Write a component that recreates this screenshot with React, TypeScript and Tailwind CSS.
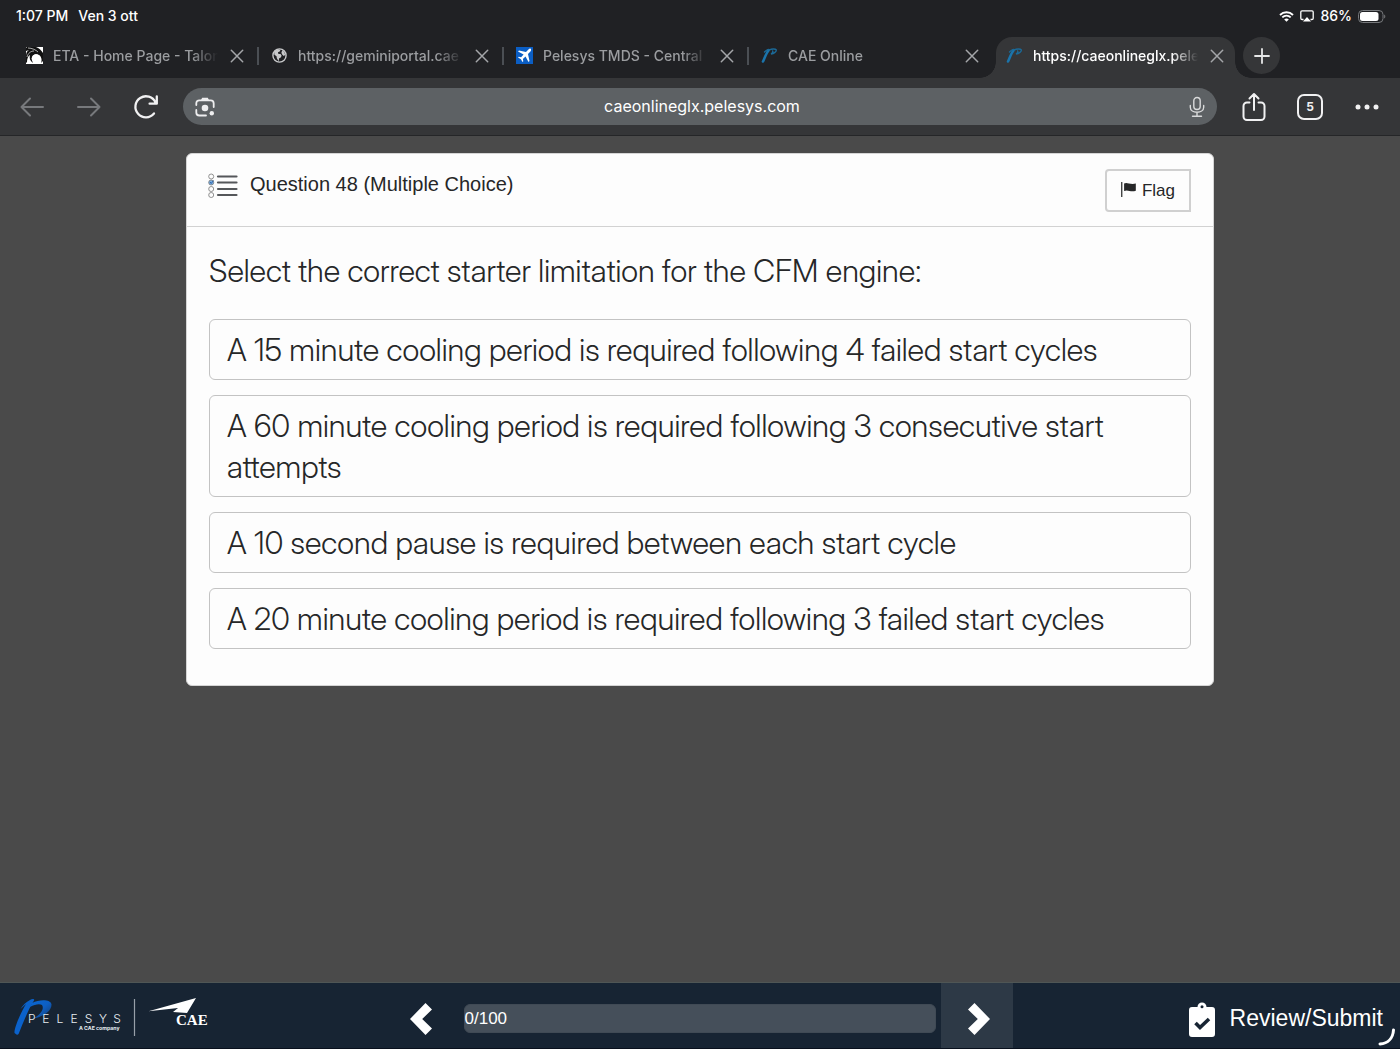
import React from "react";

const tabs = [
  { title: "ETA - Home Page - Talon", icon: "eta" },
  { title: "https://geminiportal.cae", icon: "globe" },
  { title: "Pelesys TMDS - Central", icon: "plane" },
  { title: "CAE Online", icon: "pelesys" },
  { title: "https://caeonlineglx.pele", icon: "pelesys", active: true },
];

const answers = [
  "A 15 minute cooling period is required following 4 failed start cycles",
  "A 60 minute cooling period is required following 3 consecutive start attempts",
  "A 10 second pause is required between each start cycle",
  "A 20 minute cooling period is required following 3 failed start cycles",
];

function Favicon({ kind }: { kind: string }) {
  if (kind === "eta")
    return (
      <svg viewBox="0 0 17 17" className="size-[17px] shrink-0" aria-hidden="true">
        <rect width="17" height="17" fill="#fff" />
        <path d="M1 0h9c3 1 5 3 7 6v8l-2 2c1-2 1-6-2-8-4-2-8 1-7 5l1 3C4 14 3 11 4 8 2 9 1 12 1 15L0 16V9c0-3 1-5 3-6L0 4V1z" fill="#111" />
        <path d="M2 1c4 0 8 2 10 4M1 10c1-4 4-6 7-6" stroke="#eee" strokeWidth=".7" fill="none" />
        <circle cx="10" cy="11.500" r="4.300" fill="#fff" />
      </svg>
    );
  if (kind === "globe")
    return (
      <svg viewBox="0 0 16 16" className="size-[17px] shrink-0" fill="none" aria-hidden="true">
        <circle cx="8" cy="8" r="6.200" stroke="#c8c9cb" strokeWidth="1.300" />
        <path d="M3 4.500 6 2l3 .5-.8 1.700-1.700.8.5 1.500H9l1 1.700-.8 1.600-1.500.9-.5 2.800-1.700-2.800-.3-2-2-1.500zM10.500 3l2 1.500.8 3-1.300 1-1.500-1.500-.7-1.500z" fill="#c8c9cb" />
      </svg>
    );
  if (kind === "plane")
    return (
      <svg viewBox="0 0 17 17" className="size-[17px] shrink-0" aria-hidden="true">
        <rect width="17" height="17" fill="#0b5ec4" />
        <path d="M14.700 1.800c.8.800.4 2-.5 3l-2.200 2.300 1.500 7-1 1-3-5.600-2.600 2.500.4 2.300-.8.8-1.600-2.900-2.900-1.600.8-.8 2.300.4 2.500-2.600L2 4.600l1-1 7 1.500 2.200-2.300c1-1 1.800-1.600 2.500-1z" fill="#fff" />
      </svg>
    );
  return (
    <svg viewBox="0 0 17 17" className="size-[17px] shrink-0" fill="none" aria-hidden="true">
      <path d="M2 14.500C3.500 11.500 5 6.500 7.500 3.500" stroke="#1b74ab" strokeWidth="2.600" strokeLinecap="round" />
      <path d="M3.500 5C6 2.500 8 2 8.500 3c2-1.300 6-1.300 6.800-.2.500 1.700-2.300 3.700-5.300 4.200 1.300-.8 2.200-2 1.700-3" stroke="#1b6997" strokeWidth="1.400" strokeLinecap="round" />
    </svg>
  );
}

function CloseIcon() {
  return (
    <svg viewBox="0 0 14 14" className="size-3.5" fill="none" stroke="#a4a6a9" strokeWidth="1.500" strokeLinecap="round" aria-hidden="true">
      <path d="m1.300 1.300 11.400 11.400M12.700 1.300 1.300 12.700" />
    </svg>
  );
}

function StatusBar() {
  return (
    <div className="flex h-[37px] items-start justify-between px-4 pt-1.5 text-sm leading-5 font-medium text-white">
      <div className="flex gap-2.5">
        <span>1:07 PM</span>
        <span>Ven 3 ott</span>
      </div>
      <div className="flex items-center gap-1.5">
        <svg viewBox="0 0 15 11" className="h-[11px] w-[15px]" fill="none" aria-hidden="true">
          <path d="M1 4c3.700-3.700 9.300-3.700 13 0M3.300 6.400c2.400-2.400 6-2.400 8.400 0" stroke="#fff" strokeWidth="1.900" />
          <path d="M5.200 8.400c1.400-1.200 3.200-1.200 4.600 0L7.500 10.800z" fill="#fff" />
        </svg>
        <svg viewBox="0 0 14 12" className="h-3 w-3.5" aria-hidden="true">
          <path d="M3.500 9.500H2.200C1.300 9.500.8 9 .8 8.200V2C.8 1.300 1.300.8 2 .8h10c.7 0 1.200.5 1.200 1.200v6.200c0 .8-.5 1.300-1.400 1.300h-1.300" fill="none" stroke="#fff" strokeWidth="1.300" />
          <path d="m7 7 4 4.500H3z" fill="#fff" />
        </svg>
        <span>86%</span>
        <svg viewBox="0 0 28 13" className="-mr-0.5 h-[13px] w-7" aria-hidden="true">
          <rect x=".5" y=".5" width="24.500" height="12" rx="4" fill="none" stroke="#77797c" />
          <rect x="2" y="2" width="18.500" height="9" rx="2.500" fill="#fff" />
          <path d="M26.200 4.500c1.500.5 1.500 3.500 0 4z" fill="#77797c" />
        </svg>
      </div>
    </div>
  );
}

function TabStrip() {
  return (
    <div className="flex h-[41px] pl-3.5" role="tablist">
      {tabs.map((t, i) => (
        <div
          key={i}
          className={
            t.active
              ? "relative mx-0.5 flex w-[239px] min-w-0 items-center rounded-t-2xl bg-[#353638] pr-[11px] pb-1 pl-2.5 text-white"
              : "relative flex w-[245px] min-w-0 items-center pr-[15px] pb-1 pl-3 text-[#9b9da0]"
          }
        >
          <Favicon kind={t.icon} />
          <button
            role="tab"
            aria-selected={!!t.active}
            className="ml-2.5 min-w-0 flex-1 overflow-hidden text-left text-sm leading-5 font-medium whitespace-nowrap [mask-image:linear-gradient(to_right,black_84%,transparent)]"
          >
            {t.title}
          </button>
          <button aria-label="Close tab" className="ml-3">
            <CloseIcon />
          </button>
          {i < 3 && <span className="absolute top-2.5 right-0 h-[18px] w-0.5 bg-[#4b4f54]" />}
          {t.active && (
            <>
              <span className="absolute bottom-0 -left-4 size-4 bg-[radial-gradient(circle_at_0_0,transparent_15.5px,#353638_16px)]" />
              <span className="absolute -right-4 bottom-0 size-4 bg-[radial-gradient(circle_at_100%_0,transparent_15.5px,#353638_16px)]" />
            </>
          )}
        </div>
      ))}
      <button aria-label="New tab" className="ml-1.5 flex size-[37px] items-center justify-center rounded-full bg-[#353638]">
        <svg viewBox="0 0 16 16" className="size-4" stroke="#e6e7e8" strokeWidth="1.800" strokeLinecap="round" aria-hidden="true">
          <path d="M8 1v14M1 8h14" />
        </svg>
      </button>
    </div>
  );
}

function Toolbar() {
  return (
    <div className="flex h-[58px] items-center border-b border-[#252628] bg-[#353638] pr-[21px] pl-5">
      <button aria-label="Back" className="mr-[33px]">
        <svg viewBox="0 0 24 20" className="h-5 w-6" fill="none" stroke="#77797c" strokeWidth="2" strokeLinecap="round" strokeLinejoin="round" aria-hidden="true">
          <path d="M23 10H1.500M10 1.500 1.500 10l8.500 8.500" />
        </svg>
      </button>
      <button aria-label="Forward" className="mr-8">
        <svg viewBox="0 0 24 20" className="h-5 w-6" fill="none" stroke="#77797c" strokeWidth="2" strokeLinecap="round" strokeLinejoin="round" aria-hidden="true">
          <path d="M1 10h21.500M14 1.500l8.500 8.500-8.500 8.500" />
        </svg>
      </button>
      <button aria-label="Reload" className="mr-6">
        <svg viewBox="0 0 26 26" className="size-[26px]" fill="none" stroke="#f1f1f2" strokeWidth="2.300" strokeLinecap="round" strokeLinejoin="round" aria-hidden="true">
          <path d="M21 19.500A10.500 10.500 0 1 1 22.500 8.500M23.800 2.500v7.200h-7.200" />
        </svg>
      </button>
      <div className="flex h-[37px] min-w-0 flex-1 items-center rounded-full bg-[#5d6164] px-3">
        <button aria-label="Search with camera">
          <svg viewBox="0 0 20 20" className="size-5" fill="none" stroke="#eeeeef" strokeWidth="1.800" strokeLinecap="round" aria-hidden="true">
            <path d="M1.300 8V6.500C1.300 4.600 2.500 3.300 4.300 3.300H15.700c1.700 0 3 1.300 3 3.200V10M1.300 13v2.500c0 1.800 1.200 3 3 3H11" />
            <path d="M6 3 7.200.8h5.600L14 3z" fill="#eeeeef" stroke="none" />
            <circle cx="10" cy="11" r="3.300" fill="#eeeeef" stroke="none" />
            <circle cx="16.800" cy="16.300" r="2.200" fill="#eeeeef" stroke="none" />
          </svg>
        </button>
        <input
          aria-label="Address"
          defaultValue="caeonlineglx.pelesys.com"
          className="mb-0.5 min-w-0 flex-1 bg-transparent text-center text-base leading-6 text-white outline-none"
        />
        <button aria-label="Voice search">
          <svg viewBox="0 0 16 22" className="h-[22px] w-4" fill="none" stroke="#d9dadb" strokeWidth="1.400" strokeLinecap="round" aria-hidden="true">
            <rect x="4.800" y="1.500" width="6.400" height="12" rx="3.200" />
            <path d="M1.300 9.500v1.700C1.300 18 14.700 18 14.700 11.200V9.500M8 16.300v4M3.500 20.300h9" />
          </svg>
        </button>
      </div>
      <button aria-label="Share" className="ml-6">
        <svg viewBox="0 0 26 30" className="h-[30px] w-[26px]" fill="none" stroke="#f1f1f2" strokeWidth="2" strokeLinecap="round" strokeLinejoin="round" aria-hidden="true">
          <path d="M8.500 10.500H6A3.500 3.500 0 0 0 2.500 14v10.500A3.500 3.500 0 0 0 6 28h14a3.500 3.500 0 0 0 3.500-3.500V14a3.500 3.500 0 0 0-3.500-3.500h-2.500M13 18V2.500M8.500 6.500 13 2l4.500 4.500" />
        </svg>
      </button>
      <button aria-label="Show 5 tabs" className="ml-[30px] flex size-[26px] items-center justify-center rounded-[7px] border-2 border-[#f1f1f2] text-xs font-bold text-[#f1f1f2]">
        5
      </button>
      <button aria-label="More" className="ml-8">
        <svg viewBox="0 0 24 6" className="h-1.5 w-6" fill="#f1f1f2" aria-hidden="true">
          <circle cx="3" cy="3" r="2.500" />
          <circle cx="12" cy="3" r="2.500" />
          <circle cx="21" cy="3" r="2.500" />
        </svg>
      </button>
    </div>
  );
}

function ListIcon() {
  return (
    <svg viewBox="0 0 30 26" className="h-[26px] w-[30px]" fill="none" aria-hidden="true">
      {[3.5, 9.5, 16, 22].map((y, i) => (
        <g key={y}>
          <circle cx="3.200" cy={y} r="2.500" stroke="#777" strokeWidth=".8" fill={i === 1 ? "#7db1e4" : "none"} />
          <path d={`M10 ${y}h18.500`} stroke="#55575a" strokeWidth="2.200" strokeLinecap="round" />
        </g>
      ))}
      <path d="m2 9 1.200 1.500L5.500 7.500" stroke="#2c62a8" strokeWidth="1" />
    </svg>
  );
}

function QuestionCard() {
  return (
    <section className="mx-auto w-full max-w-[1028px] rounded-md border border-[#d5d5d5] bg-[#fdfdfd] text-[#262728]">
      <header className="flex items-start border-b border-[#d2d2d2] pt-[15px] pr-[22px] pb-3.5 pl-[21px]">
        <div className="pt-1">
          <ListIcon />
        </div>
        <h1 className="ml-3 flex-1 text-xl leading-[30px] [font-family:'Liberation_Sans',Arial,sans-serif]">Question 48 (Multiple Choice)</h1>
        <button className="flex h-[43px] items-center gap-1.5 rounded-l border-2 border-[#d0d0d0] px-3.5 text-[17px] leading-6 [font-family:'Liberation_Sans',Arial,sans-serif]">
          <svg viewBox="0 0 16 16" className="mb-0.5 size-[15px]" aria-hidden="true">
            <path d="M.8 0v16" stroke="#262728" strokeWidth="1.300" />
            <path d="M3.300 1.700c3-2 6 1.500 12.500 0v7.600c-5.500 2-8.500-1.700-12.500.4z" fill="#262728" />
          </svg>
          Flag
        </button>
      </header>
      <fieldset className="px-[22px] pt-[23px] pb-9 text-[31px] leading-[41px] font-light [font-family:'Inter_Display',Inter,sans-serif]">
        <legend className="float-left mb-7 w-full">Select the correct starter limitation for the CFM engine:</legend>
        <div className="clear-both flex flex-col gap-[15px]">
          {answers.map((a) => (
            <label key={a} className="block cursor-pointer rounded-md border border-[#c3c3c3] px-[17px] py-[9px]">
              <input type="radio" name="answer" className="sr-only" />
              {a}
            </label>
          ))}
        </div>
      </fieldset>
    </section>
  );
}

function PelesysLogo() {
  return (
    <svg viewBox="0 0 200 42" className="h-[42px] w-[200px]" role="img" aria-label="Pelesys, a CAE company">
      <defs>
        <linearGradient id="brush" x1="0" y1="0" x2="1" y2="1">
          <stop offset="0" stopColor="#0a66d0" />
          <stop offset="0.5" stopColor="#0d5fc4" />
          <stop offset="1" stopColor="#173a6b" />
        </linearGradient>
      </defs>
      <path d="M16 2c2-1.500 5-1.500 4 .5C14 12 9 25 5 35c-.5 1.500-1.300 2-2.500 1.500L.5 35C0 30 7 14 12 6L6.500 11C9 7 12 4 16 2z" fill="#0b62cb" />
      <path d="M18 5c8-4 19-3.500 19.500 1.500.3 6-7 12-18 14C27 16 30.500 11 28 7c-2-1.500-7-1-12 2z" fill="url(#brush)" />
      <g fill="#e8edf2" fontFamily="Inter, sans-serif">
        {["P", "E", "L", "E", "S", "Y", "S"].map((c, i) => (
          <text key={i} x={14 + i * 14.2} y="25" fontSize="12" fontWeight="300">
            {c}
          </text>
        ))}
        <text x="65" y="32" fontSize="5.200" fontWeight="700">A CAE company</text>
      </g>
      <path d="M120.500 1v37" stroke="#98a0a9" strokeWidth="1.200" />
      <path d="M134.500 13.300 182 0 173 15l-14-1 5-4z" fill="#fff" />
      <text x="162" y="27" fontSize="15" fontWeight="700" fill="#fff" fontFamily="Liberation Serif, serif">CAE</text>
    </svg>
  );
}

function Footer() {
  return (
    <footer className="relative grid h-[67px] grid-cols-[1fr_625px_1fr] items-stretch border-t border-b border-t-[#4f5655] border-b-[#08101d] bg-[#172433] text-white [font-family:'Liberation_Sans',Arial,sans-serif]">
      <div className="flex items-center pt-1.5 pl-3.5">
        <PelesysLogo />
      </div>
      <div className="flex items-stretch">
        <button aria-label="Previous question" className="flex flex-none items-center px-[22px] pt-1.5">
          <svg viewBox="0 0 22 32" className="h-8 w-[22px]" aria-hidden="true">
            <path d="M15.500 0 22 6.500 12.200 16 22 25.500 15.500 32 0 16z" fill="#fff" />
          </svg>
        </button>
        <div className="mt-[21px] ml-2.5 h-[29px] flex-1 rounded-md border border-[#404a55] bg-[#454f5a] text-[17px] leading-[27px]" role="progressbar" aria-valuemin={0} aria-valuemax={100} aria-valuenow={0} aria-label="Answered questions">
          0/100
        </div>
        <button aria-label="Next question" className="ml-[5px] flex w-[72px] items-center justify-center bg-[#2d3946] pt-1.5 pl-1">
          <svg viewBox="0 0 22 32" className="h-8 w-[22px]" aria-hidden="true">
            <path d="M6.500 0 0 6.500 9.800 16 0 25.500 6.500 32 22 16z" fill="#fff" />
          </svg>
        </button>
      </div>
      <div className="flex items-center justify-end pt-1 pr-[17px]">
        <button className="flex items-center gap-3.5 text-[23px] leading-8">
          <svg viewBox="0 0 28 36" className="mt-1 h-9 w-7" aria-hidden="true">
            <path d="M4 5h5.500a4.500 4.500 0 0 1 9 0H24a3 3 0 0 1 3 3v24a3 3 0 0 1-3 3H4a3 3 0 0 1-3-3V8a3 3 0 0 1 3-3z" fill="#fff" />
            <circle cx="14" cy="4.800" r="1.500" fill="#172433" />
            <path d="m7.500 21 4.500 4.500 9-8.500" fill="none" stroke="#172433" strokeWidth="3.600" />
          </svg>
          Review/Submit
        </button>
      </div>
      <svg viewBox="0 0 18 18" className="absolute right-1 bottom-0.5 size-[18px]" fill="none" aria-hidden="true">
        <path d="M15.500 2C15 10 10 15.500 2 16" stroke="#fff" strokeWidth="3" strokeLinecap="round" />
      </svg>
    </footer>
  );
}

export default function App() {
  return (
    <div className="flex min-h-screen flex-col bg-[#4a4a4a] [font-family:Inter,sans-serif]">
      <div className="bg-[#202124]">
        <StatusBar />
        <TabStrip />
        <Toolbar />
      </div>
      <main className="flex-1 px-4 pt-[17px] pb-8">
        <QuestionCard />
      </main>
      <Footer />
    </div>
  );
}
